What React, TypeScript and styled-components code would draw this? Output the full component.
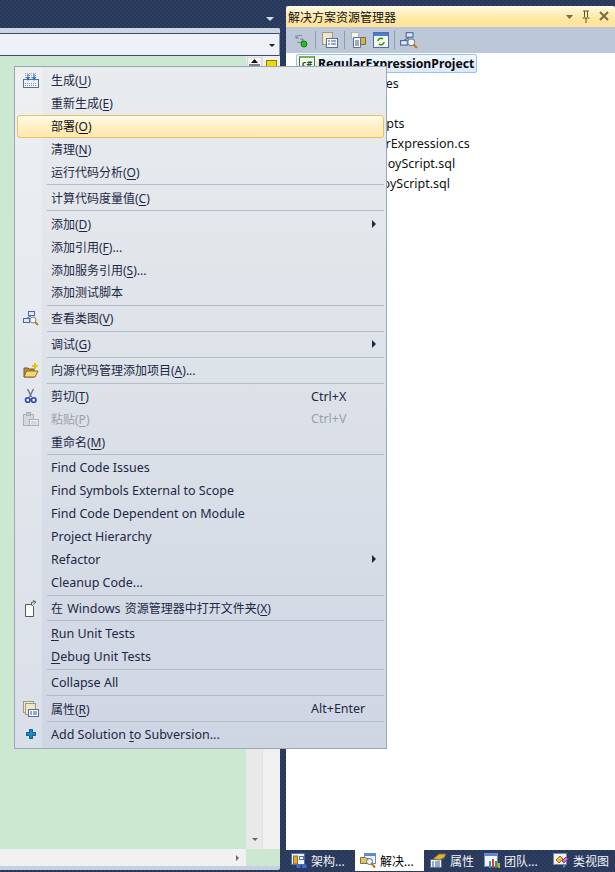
import React from "react";
import styled, { createGlobalStyle } from "styled-components";

const GlobalStyle = createGlobalStyle`
  html, body {
    margin: 0;
    padding: 0;
    background: #2a3a5c;
  }
  body {
    font-family: "Noto Sans", "Noto Sans CJK SC", sans-serif;
  }
`;

type MenuEntry =
  | { sep: true }
  | {
      sep?: false;
      label: React.ReactNode;
      icon?: React.ReactNode;
      shortcut?: string;
      arrow?: boolean;
      hot?: boolean;
      off?: boolean;
      latin?: boolean;
    };

const BuildIcon = () => (
  <svg width="16" height="15" viewBox="0 0 16 15">
    <path d="M2 .5h12M2 2.500h12M2 4.500h12" stroke="#8fa2c4" strokeDasharray="1 1" />
    <rect x=".5" y="6.500" width="15" height="8" fill="#eef2f8" stroke="#5a6f96" />
    <path d="M2 10.500h12M2 12.500h12" stroke="#7f93b8" strokeDasharray="1 1" />
    <path d="M3 4h4L5 8zM9 4h4l-2 4z" fill="#2f6fd0" />
    <path d="M5 1v4M11 1v4" stroke="#2f6fd0" />
  </svg>
);

const ClassIcon = () => (
  <svg width="16" height="16" viewBox="0 0 16 16">
    <rect x="5.500" y="1.500" width="6" height="4" fill="#dfe8f6" stroke="#4d6a9c" />
    <rect x=".5" y="8.500" width="6" height="4" fill="#dfe8f6" stroke="#4d6a9c" />
    <path d="M8 6 4 8" stroke="#4d6a9c" />
    <circle cx="10" cy="10" r="3" fill="#f4f6f8" stroke="#7c8794" />
    <path d="m12 12 3 3" stroke="#c8791c" strokeWidth="2" />
  </svg>
);

const FolderAddIcon = () => (
  <svg width="16" height="16" viewBox="0 0 16 16">
    <path d="M1 6h4l1 1h5v8H1z" fill="#b8902f" stroke="#6f5a28" />
    <path d="M1 15 3.500 9H15l-3 6z" fill="#f6d675" stroke="#8a6d2a" />
    <path d="M12 1v6M9 4h6" stroke="#e8c010" strokeWidth="2" />
  </svg>
);

const ScissorsIcon = () => (
  <svg width="14" height="16" viewBox="0 0 14 16">
    <path d="M3.500 1l4 8M9.500 1l-4 8" stroke="#6f7b8c" strokeWidth="1.500" fill="none" />
    <circle cx="3.800" cy="12" r="2.300" fill="none" stroke="#2b49a8" strokeWidth="1.600" />
    <circle cx="9.700" cy="12" r="2.300" fill="none" stroke="#2b49a8" strokeWidth="1.600" />
  </svg>
);

const PasteIcon = () => (
  <svg width="16" height="16" viewBox="0 0 16 16">
    <rect x=".5" y="3.500" width="10" height="11" fill="#d5d9de" stroke="#aab0b8" />
    <rect x="3.500" y="1.500" width="4" height="3" fill="#c4c8ce" stroke="#aab0b8" />
    <rect x="6.500" y="8.500" width="9" height="6" fill="#eef0f2" stroke="#aab0b8" />
    <path d="M8 11h6M8 13h6" stroke="#bcc1c8" />
  </svg>
);

const OpenFileIcon = () => (
  <svg width="14" height="17" viewBox="0 0 14 17">
    <path d="M1.500 4.500h6l2 2v10h-8z" fill="#fbfbf6" stroke="#55585e" />
    <path d="M7.500 5.500v-3l3-1" stroke="#55585e" fill="none" />
    <path d="M9 .5l3 1.500-2.500 2" stroke="#55585e" fill="none" />
  </svg>
);

const PropsIcon = () => (
  <svg width="16" height="16" viewBox="0 0 16 16">
    <rect x=".5" y=".5" width="10" height="11" fill="#f0e8c8" stroke="#9a9a8c" />
    <rect x="2.500" y="2.500" width="10" height="11" fill="#efe7c4" stroke="#9a9a8c" />
    <rect x="5.500" y="8.500" width="10" height="7" fill="#f6f9fd" stroke="#5a6f96" />
    <path d="M7 11h2M10 11h4M7 13h2M10 13h4" stroke="#3a5b96" />
  </svg>
);

const SvnIcon = () => (
  <svg width="10" height="10" viewBox="0 0 10 10">
    <path d="M3.500.5h3v3h3v3h-3v3h-3v-3H.5v-3h3z" fill="#1f86c8" stroke="#0f5d92" />
  </svg>
);

const SchemaTabIcon = () => (
  <svg width="16" height="16" viewBox="0 0 16 16">
    <rect x=".5" y=".5" width="13" height="11" fill="#eef2fa" stroke="#4a6fb8" />
    <rect x="2.500" y="3" width="4" height="8" fill="#e8a828" stroke="#8a6d2a" />
    <rect x="8.500" y="3.500" width="4" height="3" fill="#fff" stroke="#4a6fb8" />
    <rect x="5.500" y="11.500" width="4" height="3.500" fill="#3f6fd0" />
    <rect x="11" y="11.500" width="4.500" height="3.500" fill="#3f6fd0" />
  </svg>
);

const SolutionTabIcon = () => (
  <svg width="17" height="16" viewBox="0 0 17 16">
    <rect x="4.500" y=".5" width="11" height="10" fill="#f2f5fb" stroke="#6c8ccc" />
    <rect x="5" y="1" width="10" height="2" fill="#5d86d8" />
    <path d="M.5 4.500h5l1 1h2v5h-8z" fill="#e3c36a" stroke="#85703a" />
    <circle cx="9.500" cy="8.500" r="3" fill="#eef2f4" stroke="#5f6a78" />
    <path d="m11.500 10.500 3.500 4" stroke="#b8771c" strokeWidth="2" />
  </svg>
);

const PropertyTabIcon = () => (
  <svg width="16" height="15" viewBox="0 0 16 15">
    <rect x=".5" y="6.500" width="11" height="8" fill="#f6f9fd" stroke="#5a6f96" />
    <path d="M2 9h2M5 9h5M2 11h2M5 11h5M2 13h2M5 13h5" stroke="#3a5b96" />
    <path d="M3 6 9 1h7l-2 4-5 2z" fill="#dcb23c" stroke="#7c6a2c" />
  </svg>
);

const TeamTabIcon = () => (
  <svg width="16" height="16" viewBox="0 0 16 16">
    <rect x=".5" y=".5" width="13" height="13" fill="#f2f5fb" stroke="#6c8ccc" />
    <rect x="1" y="1" width="12" height="2" fill="#5d86d8" />
    <rect x="5" y="8" width="2" height="7" fill="#3f8fd0" />
    <rect x="8" y="6" width="2" height="9" fill="#d8402c" />
    <rect x="11" y="8" width="2" height="7" fill="#3ca03c" />
    <rect x="14" y="10" width="2" height="5" fill="#e0a020" />
  </svg>
);

const ClassTabIcon = () => (
  <svg width="16" height="16" viewBox="0 0 16 16">
    <rect x=".5" y=".5" width="13" height="11" fill="#eef2f8" stroke="#7c8a9c" />
    <path d="m3 7 4-4 3 3-4 4z" fill="#e8c030" stroke="#8a6d2a" />
    <path d="m9 8 4-4 2 2-4 4z" fill="#d070d8" stroke="#8a3a90" />
    <path d="m10 11 3 2-3 2z" fill="#3f8fd8" />
  </svg>
);

const Hot = styled.span`
  text-decoration: underline;
  text-underline-offset: 2px;
`;

const Latin = styled.span`
  font-size: 12.5px;
  margin: 0 1px;
`;

const menu: MenuEntry[] = [
  { label: <>生成(<Hot>U</Hot>)</>, icon: <BuildIcon /> },
  { label: <>重新生成(<Hot>E</Hot>)</> },
  { label: <>部署(<Hot>O</Hot>)</>, hot: true },
  { label: <>清理(<Hot>N</Hot>)</> },
  { label: <>运行代码分析(<Hot>O</Hot>)</> },
  { sep: true },
  { label: <>计算代码度量值(<Hot>C</Hot>)</> },
  { sep: true },
  { label: <>添加(<Hot>D</Hot>)</>, arrow: true },
  { label: <>添加引用(<Hot>F</Hot>)...</> },
  { label: <>添加服务引用(<Hot>S</Hot>)...</> },
  { label: "添加测试脚本" },
  { sep: true },
  { label: <>查看类图(<Hot>V</Hot>)</>, icon: <ClassIcon /> },
  { sep: true },
  { label: <>调试(<Hot>G</Hot>)</>, arrow: true },
  { sep: true },
  { label: <>向源代码管理添加项目(<Hot>A</Hot>)...</>, icon: <FolderAddIcon /> },
  { sep: true },
  { label: <>剪切(<Hot>T</Hot>)</>, icon: <ScissorsIcon />, shortcut: "Ctrl+X" },
  { label: <>粘贴(<Hot>P</Hot>)</>, icon: <PasteIcon />, shortcut: "Ctrl+V", off: true },
  { label: <>重命名(<Hot>M</Hot>)</> },
  { sep: true },
  { label: "Find Code Issues", latin: true },
  { label: "Find Symbols External to Scope", latin: true },
  { label: "Find Code Dependent on Module", latin: true },
  { label: "Project Hierarchy", latin: true },
  { label: "Refactor", arrow: true, latin: true },
  { label: "Cleanup Code...", latin: true },
  { sep: true },
  { label: <>在 <Latin>Windows</Latin> 资源管理器中打开文件夹(<Hot>X</Hot>)</>, icon: <OpenFileIcon /> },
  { sep: true },
  { label: <><Hot>R</Hot>un Unit Tests</>, latin: true },
  { label: <><Hot>D</Hot>ebug Unit Tests</>, latin: true },
  { sep: true },
  { label: "Collapse All", latin: true },
  { sep: true },
  { label: <>属性(<Hot>R</Hot>)</>, icon: <PropsIcon />, shortcut: "Alt+Enter" },
  { sep: true },
  { label: <>Add Solution <Hot>t</Hot>o Subversion...</>, icon: <SvnIcon />, latin: true },
];

const treeRows = [
  { text: "Properties", indent: 52 },
  { text: "引用", indent: 41 },
  { text: "Scripts", indent: 79 },
  { text: "RegularExpression.cs", indent: 59 },
  { text: "PostDeployScript.sql", indent: 49 },
  { text: "PreDeployScript.sql", indent: 50 },
];

const tabs = [
  { label: "架构...", width: 69, icon: <SchemaTabIcon /> },
  { label: "解决...", width: 69, icon: <SolutionTabIcon />, active: true },
  { label: "属性", width: 54, icon: <PropertyTabIcon /> },
  { label: "团队...", width: 69, icon: <TeamTabIcon /> },
  { label: "类视图", width: 67, icon: <ClassTabIcon /> },
];

export default function App() {
  return (
    <Page>
      <GlobalStyle />
      <LeftColumn>
        <TopStrip>
          <DownCaret />
        </TopStrip>
        <EditorPanel>
          <ComboBar>
            <Combo>
              <ComboArrow />
            </Combo>
          </ComboBar>
          <EditorBody>
            <EditorMain />
            <VScroll>
              <SplitBtn>
                <svg width="11" height="7" viewBox="0 0 11 7">
                  <path d="M5.500 0 9 4H2z" fill="#111" />
                  <path d="M0 6h11" stroke="#111" />
                </svg>
              </SplitBtn>
              <ScrollDown />
            </VScroll>
            <Marker />
          </EditorBody>
          <HScroll>
            <HTrack>
              <HArrow />
            </HTrack>
            <HCorner />
          </HScroll>
        </EditorPanel>
      </LeftColumn>

      <RightColumn>
        <TitleBar>
          <Title>解决方案资源管理器</Title>
          <TitleTools>
            <svg width="46" height="14" viewBox="0 0 46 14">
              <path d="M2 5h7L5.500 9z" fill="#7c6a3c" />
              <path d="M19 1h6M20.500 1v6M23.500 1v6M18.500 8h7M22 8v5" stroke="#5f5434" fill="none" />
              <path d="m36 2 8 8M44 2l-8 8" stroke="#7c6a3c" strokeWidth="2" />
            </svg>
          </TitleTools>
        </TitleBar>
        <ToolStrip>
          <svg width="18" height="18" viewBox="0 0 18 18">
            <path d="M4 7a4 4 0 0 1 6-2M11 8a4 4 0 0 1-6 3M4 4v3h3M11 12V8H8" stroke="#7b8494" fill="none" />
            <circle cx="12" cy="13" r="3" fill="#20c020" stroke="#157a15" />
          </svg>
          <ToolSep />
          <svg width="18" height="18" viewBox="0 0 18 18">
            <rect x="1.500" y="1.500" width="10" height="12" fill="#efe7c4" stroke="#9a9a8c" />
            <rect x="5.500" y="7.500" width="11" height="9" fill="#f6f9fd" stroke="#5a6f96" />
            <path d="M7 10h2M10 10h5M7 13h2M10 13h5" stroke="#3a5b96" />
          </svg>
          <ToolSep />
          <svg width="16" height="18" viewBox="0 0 16 18">
            <path d="M1.500 1.500h7v6h-7z" fill="#f6f6f0" stroke="#8a8a80" strokeDasharray="1 1" />
            <path d="M7.500 6.500h8v7h-8z" fill="#d9b24a" stroke="#7c6a3c" />
            <path d="M3.500 6.500h7v10h-7z" fill="#fbfbfb" stroke="#5a6f96" />
            <path d="M5 10h4M5 12h4M5 14h4" stroke="#3a5b96" />
          </svg>
          <ToolGap />
          <svg width="16" height="16" viewBox="0 0 16 16">
            <rect x=".5" y=".5" width="15" height="15" fill="#f4f7ee" stroke="#4a6fa8" />
            <rect x="1" y="1" width="14" height="3" fill="#4a7fd0" />
            <path d="M5 9a3 3 0 0 1 5-2M11 10a3 3 0 0 1-5 2" stroke="#3a8a20" strokeWidth="1.500" fill="none" />
          </svg>
          <ToolSep />
          <svg width="18" height="18" viewBox="0 0 16 16">
            <rect x="5.500" y="1.500" width="6" height="4" fill="#dfe8f6" stroke="#4d6a9c" />
            <rect x=".5" y="8.500" width="6" height="4" fill="#dfe8f6" stroke="#4d6a9c" />
            <path d="M8 6 4 8" stroke="#4d6a9c" />
            <circle cx="10" cy="10" r="3" fill="#f4f6f8" stroke="#7c8794" />
            <path d="m12 12 3 3" stroke="#c8791c" strokeWidth="2" />
          </svg>
        </ToolStrip>
        <Tree>
          <RootRow>
            <ProjectIcon>c#</ProjectIcon>
            <RootLabel>RegularExpressionProject</RootLabel>
          </RootRow>
          {treeRows.map((r) => (
            <TreeRow key={r.text} $indent={r.indent}>
              {r.text}
            </TreeRow>
          ))}
        </Tree>
        <TabBar>
          {tabs.map((t) => (
            <Tab key={t.label} $active={!!t.active} $width={t.width}>
              <TabIcon>{t.icon}</TabIcon>
              {t.label}
            </Tab>
          ))}
        </TabBar>
      </RightColumn>

      <Menu>
        {menu.map((m, i) =>
          m.sep ? (
            <Sep key={i} />
          ) : (
            <Item key={i} $hot={!!m.hot} $off={!!m.off}>
              <IconCell $hot={!!m.hot}>{m.icon}</IconCell>
              <Label $latin={!!m.latin}>{m.label}</Label>
              {m.shortcut ? <Shortcut>{m.shortcut}</Shortcut> : null}
              {m.arrow ? <Arrow /> : null}
            </Item>
          ),
        )}
      </Menu>
    </Page>
  );
}

const Page = styled.div`
  position: relative;
  width: 615px;
  height: 872px;
  display: flex;
  overflow: hidden;
  font-size: 12px;
  background-color: #2a3a5c;
  background-image: repeating-conic-gradient(#2e3f64 0 25%, #283758 0 50%);
  background-size: 4px 4px;
`;

const LeftColumn = styled.div`
  width: 280px;
  display: flex;
  flex-direction: column;
  padding-bottom: 2px;
`;

const TopStrip = styled.div`
  height: 28px;
  display: flex;
  justify-content: flex-end;
  align-items: flex-end;
  padding: 0 6px 7px 0;
  box-sizing: border-box;
`;

const DownCaret = styled.div`
  width: 0;
  height: 0;
  border-left: 4px solid transparent;
  border-right: 4px solid transparent;
  border-top: 4px solid #d5dcea;
`;

const EditorPanel = styled.div`
  flex: 1;
  display: flex;
  flex-direction: column;
  min-height: 0;
  padding-bottom: 4px;
  background: #c8cfde;
  border-radius: 0 2px 2px 0;
`;

const ComboBar = styled.div`
  height: 28px;
  padding-top: 5px;
  box-sizing: border-box;
  background: #ccd5e4;
  border-radius: 0 2px 0 0;
`;

const Combo = styled.div`
  height: 23px;
  box-sizing: border-box;
  background: #eff1f8;
  border-top: 1px solid #3b4c72;
  border-bottom: 1px solid #3b4c72;
  border-right: 1px solid #8a97b2;
  display: flex;
  justify-content: flex-end;
  align-items: center;
  padding-right: 4px;
`;

const ComboArrow = styled.div`
  width: 0;
  height: 0;
  margin-top: 2px;
  border-left: 3px solid transparent;
  border-right: 3px solid transparent;
  border-top: 3px solid #1c1c1c;
`;

const EditorBody = styled.div`
  position: relative;
  flex: 1;
  min-height: 0;
  display: flex;
`;

const EditorMain = styled.div`
  flex: 1;
  background: #cde8d0;
`;

const VScroll = styled.div`
  width: 34px;
  background: linear-gradient(90deg, #e9e9e9 0 16px, #e2e2e2 16px 17px, #f0f0f0 17px);
  display: flex;
  flex-direction: column;
  justify-content: space-between;
  align-items: flex-start;
  padding: 1px 0 8px 1px;
  box-sizing: border-box;
`;

const SplitBtn = styled.div`
  width: 15px;
  height: 10px;
  display: flex;
  align-items: center;
  justify-content: center;
  box-sizing: border-box;
  background: #f4f4f4;
  border: 1px solid #d8d8d8;
`;

const ScrollDown = styled.div`
  width: 0;
  height: 0;
  margin-left: 5px;
  border-left: 3px solid transparent;
  border-right: 3px solid transparent;
  border-top: 3px solid #666;
`;

const Marker = styled.div`
  position: absolute;
  top: 4px;
  right: 3px;
  width: 11px;
  height: 10px;
  box-sizing: border-box;
  background: #f0d800;
  border: 1px solid #8a7a20;
`;

const HScroll = styled.div`
  height: 17px;
  display: flex;
`;

const HTrack = styled.div`
  flex: 1;
  background: #f1f1f1;
  display: flex;
  justify-content: flex-end;
  align-items: center;
  padding-right: 7px;
`;

const HArrow = styled.div`
  width: 0;
  height: 0;
  border-top: 3px solid transparent;
  border-bottom: 3px solid transparent;
  border-left: 3px solid #666;
`;

const HCorner = styled.div`
  width: 34px;
  background: #cde8d0;
`;

const RightColumn = styled.div`
  width: 329px;
  margin-left: 6px;
  padding-top: 6px;
  display: flex;
  flex-direction: column;
`;

const TitleBar = styled.div`
  height: 21px;
  flex: none;
  display: flex;
  align-items: center;
  justify-content: space-between;
  padding: 0 5px 0 2px;
  border-radius: 2px 2px 0 0;
  background: linear-gradient(180deg, #fffbe8 0%, #ffe8a6 55%, #ffe19a 100%);
`;

const Title = styled.div`
  font-size: 12px;
  color: #111;
`;

const TitleTools = styled.div`
  display: flex;
  align-items: center;
`;

const ToolStrip = styled.div`
  height: 26px;
  flex: none;
  display: flex;
  align-items: center;
  padding-left: 6px;
  box-sizing: border-box;
  background: #bcc7d8;
`;

const ToolSep = styled.div`
  width: 1px;
  height: 18px;
  margin: 0 5px;
  background: #8f9bb0;
`;

const ToolGap = styled.div`
  width: 7px;
`;

const Tree = styled.div`
  flex: 1;
  min-height: 0;
  background: #fff;
  padding-top: 1px;
`;

const RootRow = styled.div`
  width: 181px;
  height: 19px;
  margin: 0 0 1px 10px;
  padding-left: 2px;
  box-sizing: border-box;
  display: flex;
  align-items: center;
  background: linear-gradient(180deg, #f2f8ff, #d8e8fb);
  border: 1px solid #9dbfe8;
  border-radius: 2px;
`;

const ProjectIcon = styled.div`
  width: 16px;
  height: 15px;
  flex: none;
  box-sizing: border-box;
  border: 1px solid #4a7a3a;
  border-top: 2px solid #7fb04a;
  background: #f6fbf0;
  font-size: 9px;
  font-weight: 700;
  line-height: 11px;
  text-align: center;
  color: #1d5a1d;
  margin-right: 3px;
`;

const RootLabel = styled.div`
  font-weight: 700;
  font-size: 12.25px;
  color: #0a0a0a;
`;

const TreeRow = styled.div<{ $indent: number }>`
  height: 20px;
  line-height: 20px;
  font-size: 12.5px;
  color: #111;
  padding-left: ${(p) => p.$indent}px;
`;

const TabBar = styled.div`
  height: 22px;
  flex: none;
  display: flex;
  align-items: flex-start;
`;

const Tab = styled.div<{ $active: boolean; $width: number }>`
  width: ${(p) => p.$width}px;
  height: 21px;
  flex: none;
  box-sizing: border-box;
  display: flex;
  align-items: center;
  padding-left: 5px;
  margin-right: ${(p) => (p.$active ? 1 : 0)}px;
  white-space: nowrap;
  color: ${(p) => (p.$active ? "#000" : "#f2f4f8")};
  background: ${(p) => (p.$active ? "#fff" : "transparent")};
`;

const TabIcon = styled.div`
  width: 20px;
  flex: none;
  display: flex;
  align-items: center;
`;

const Menu = styled.div`
  position: absolute;
  left: 14px;
  top: 66px;
  width: 373px;
  box-sizing: border-box;
  padding: 2px 2px 1.8px 1px;
  border: 1px solid #9ba7b7;
  background: linear-gradient(180deg, #e9ecee 0%, #cfd6e3 100%);

  &::before {
    content: "";
    position: absolute;
    left: 0;
    top: 0;
    bottom: 0;
    width: 27px;
    background: rgba(255, 255, 255, 0.22);
  }
`;

const Item = styled.div<{ $hot: boolean; $off: boolean }>`
  position: relative;
  height: 22.9px;
  display: flex;
  align-items: center;
  box-sizing: border-box;
  color: ${(p) => (p.$off ? "#9aa0aa" : "#1c2845")};
  ${(p) =>
    p.$hot &&
    `
    background: linear-gradient(180deg, #fffbe8 0%, #fff0c4 50%, #ffe7ac 100%);
    border: 1px solid #e5c365;
    border-radius: 3px;
    color: #111;
    margin-left: 1px;
  `}
`;

const IconCell = styled.div<{ $hot: boolean }>`
  width: ${(p) => (p.$hot ? 33 : 35)}px;
  flex: none;
  display: flex;
  justify-content: center;
  padding-right: 6px;
  box-sizing: border-box;
`;

const Label = styled.div<{ $latin: boolean }>`
  flex: 1;
  font-size: ${(p) => (p.$latin ? 12.5 : 12)}px;
  white-space: nowrap;
`;

const Shortcut = styled.div`
  font-size: 12.5px;
  width: 73px;
  flex: none;
`;

const Arrow = styled.div`
  width: 0;
  height: 0;
  margin-right: 8px;
  border-top: 4px solid transparent;
  border-bottom: 4px solid transparent;
  border-left: 4px solid #1c2845;
`;

const Sep = styled.div`
  position: relative;
  height: 1px;
  margin: 1px 0 1px 31px;
  background: #b5bcc9;
`;
